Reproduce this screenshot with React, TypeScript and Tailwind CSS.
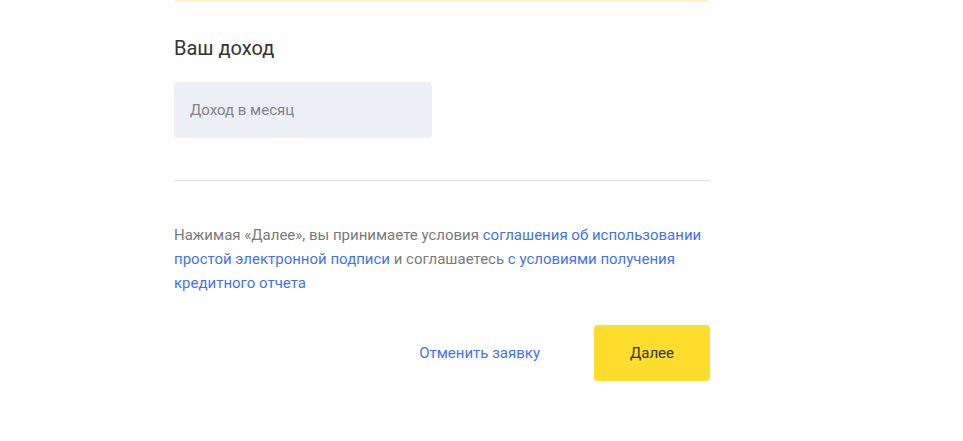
import React from "react";

export default function App() {
  return (
    <div className="min-h-[441px] w-full bg-white" style={{ fontFamily: "Roboto, 'Noto Sans', sans-serif" }}>
      <div className="ml-[174px] w-[536px]">
        <div className="mx-[1px] h-[2px] rounded-b-[4px] bg-[#fff3c4]" />
        <h2 className="mt-[34px] text-[20px] leading-[24px] text-[#333333]">Ваш доход</h2>
        <div className="mt-[22px] flex h-[56px] w-[258px] items-center rounded-[4px] bg-[#ecf0f6] px-4">
          <span className="text-[15px] text-[#80838c]">Доход в месяц</span>
        </div>
        <div className="mt-[42px] h-px bg-[#e0e0e0]" />
        <p className="mt-[42px] text-[15px] leading-[24px] text-[#7a7a7a]">
          Нажимая «Далее», вы принимаете условия{" "}
          <a className="text-[#4372f1]">соглашения об использовании простой электронной подписи</a> и соглашаетесь{" "}
          <a className="text-[#4372f1]">с условиями получения кредитного отчета</a>
        </p>
        <div className="mt-[30px] flex items-center justify-end">
          <button className="mr-[54px] text-[15px] text-[#4372f1]">Отменить заявку</button>
          <button className="flex h-[56px] w-[116px] items-center justify-center rounded-[4px] bg-[#ffdd2d] text-[15px] text-[#333333]">
            Далее
          </button>
        </div>
      </div>
    </div>
  );
}
